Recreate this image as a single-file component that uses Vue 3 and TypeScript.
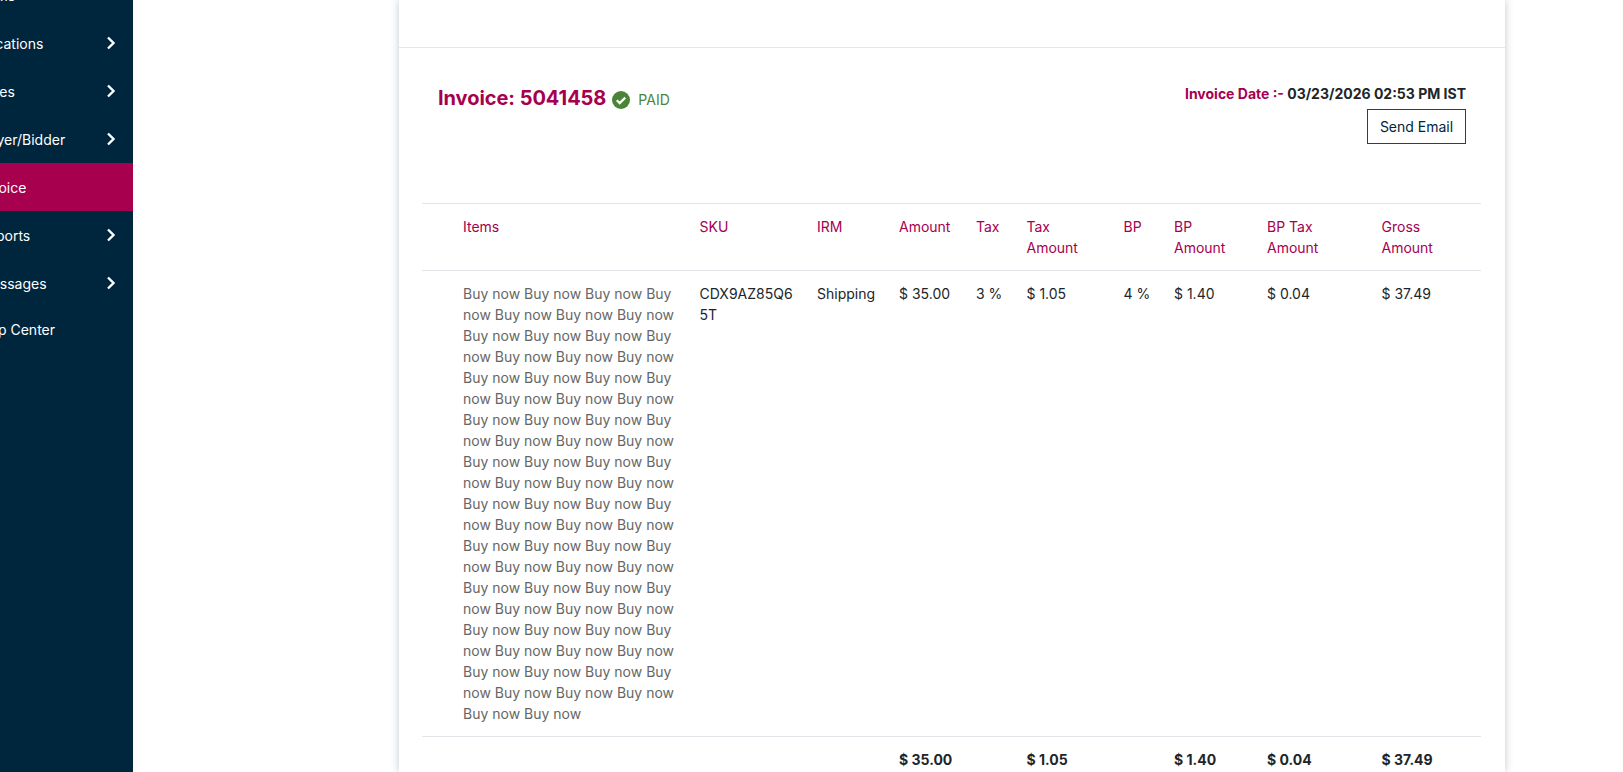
<script setup lang="ts">
interface NavItem {
  label: string;
  hasChildren: boolean;
  active?: boolean;
}

const navItems: NavItem[] = [
  {label: 'Items', hasChildren: false},
  {label: 'Locations', hasChildren: true},
  {label: 'Sales', hasChildren: true},
  {label: 'Buyer/Bidder', hasChildren: true},
  {label: 'Invoice', hasChildren: false, active: true},
  {label: 'Reports', hasChildren: true},
  {label: 'Messages', hasChildren: true},
  {label: 'Help Center', hasChildren: false},
];

const columns = [
  {key: 'blank', title: '', width: 29},
  {key: 'items', title: 'Items', width: 236.5},
  {key: 'sku', title: 'SKU', width: 117.5},
  {key: 'irm', title: 'IRM', width: 82},
  {key: 'amount', title: 'Amount', width: 77},
  {key: 'tax', title: 'Tax', width: 50.5},
  {key: 'taxAmount', title: 'Tax Amount', width: 97},
  {key: 'bp', title: 'BP', width: 50.5},
  {key: 'bpAmount', title: 'BP Amount', width: 93},
  {key: 'bpTax', title: 'BP Tax Amount', width: 114.5},
  {key: 'gross', title: 'Gross Amount', width: 111.5},
];

const itemName = Array(72).fill('Buy now').join(' ');
</script>

<template>
  <div class="page">
    <aside class="sidebar">
      <ul class="nav">
        <li v-for="item in navItems" :key="item.label" class="nav-item" :class="{active: item.active}">
          <span class="nav-label">{{ item.label }}</span>
          <svg v-if="item.hasChildren" class="chevron" viewBox="0 0 10 14" width="10" height="14">
            <path d="M2 1.5 L7.5 7 L2 12.5" fill="none" stroke="#fff" stroke-width="2.4"/>
          </svg>
        </li>
      </ul>
    </aside>

    <main class="main">
      <div class="card">
        <div class="card-top"></div>
        <section class="invoice">
          <div class="invoice-head">
            <div class="invoice-title">
              <h2>Invoice: 5041458</h2>
              <svg class="check" viewBox="0 0 18 18" width="18" height="18">
                <circle cx="9" cy="9" r="9" fill="#4a8437"/>
                <path d="M4.8 9.3 L7.7 12.1 L13.2 6.6" fill="none" stroke="#fff" stroke-width="2.2"/>
              </svg>
              <span class="status">PAID</span>
            </div>
            <div class="invoice-meta">
              <div class="invoice-date"><b>Invoice Date :-</b> 03/23/2026 02:53 PM IST</div>
              <button class="send-btn">Send Email</button>
            </div>
          </div>

          <table class="items-table">
            <colgroup>
              <col v-for="col in columns" :key="col.key" :style="{width: col.width + 'px'}"/>
            </colgroup>
            <thead>
              <tr>
                <th v-for="col in columns" :key="col.key">{{ col.title }}</th>
              </tr>
            </thead>
            <tbody>
              <tr>
                <td></td>
                <td class="item-name">{{ itemName }}</td>
                <td class="sku">CDX9AZ85Q65T</td>
                <td class="nowrap">Shipping</td>
                <td class="nowrap">$ 35.00</td>
                <td class="nowrap">3 %</td>
                <td class="nowrap">$ 1.05</td>
                <td class="nowrap">4 %</td>
                <td class="nowrap">$ 1.40</td>
                <td class="nowrap">$ 0.04</td>
                <td class="nowrap">$ 37.49</td>
              </tr>
            </tbody>
            <tfoot>
              <tr>
                <td></td>
                <td></td>
                <td></td>
                <td></td>
                <td class="nowrap">$ 35.00</td>
                <td></td>
                <td class="nowrap">$ 1.05</td>
                <td></td>
                <td class="nowrap">$ 1.40</td>
                <td class="nowrap">$ 0.04</td>
                <td class="nowrap">$ 37.49</td>
              </tr>
            </tfoot>
          </table>
        </section>
      </div>
    </main>
  </div>
</template>

<style>
html, body {
  margin: 0;
  overflow: hidden;
  background: #fff;
}
</style>

<style scoped>
.page {
  display: flex;
  height: 772px;
  overflow: hidden;
  font-family: Inter, "Liberation Sans", sans-serif;
  font-size: 14px;
  line-height: 21px;
  color: #212529;
}

.sidebar {
  flex: 0 0 133px;
  background: #00263e;
  overflow: hidden;
}

.nav {
  list-style: none;
  margin: -29px 0 0;
  padding: 0;
}

.nav-item {
  display: flex;
  align-items: center;
  justify-content: space-between;
  height: 48px;
  padding-right: 17px;
  color: #fff;
}

.nav-item:last-child {
  height: 44px;
}

.nav-item:last-child .nav-label {
  margin-left: -24px;
}

.nav-item.active {
  background: #a6004f;
}

.nav-label {
  margin-left: -21px;
  white-space: nowrap;
}

.main {
  flex: 1;
  min-width: 0;
  padding-left: 266px;
  padding-right: 118px;
}

.card {
  height: 100%;
  background: #fff;
  box-shadow: 0 0 8px rgba(0, 38, 62, 0.25);
}

.card-top {
  height: 47px;
  border-bottom: 1px solid #e3e6ea;
}

.invoice {
  padding: 0 24px 0 23px;
}

.invoice-head {
  display: flex;
  justify-content: space-between;
  align-items: flex-start;
  height: 155px;
  padding: 36px 15px 0 16px;
  box-sizing: border-box;
}

.invoice-title {
  display: flex;
  align-items: center;
  gap: 5px;
  margin-top: 2px;
}

.invoice-title h2 {
  margin: -2px 0 0;
  font-size: 20px;
  line-height: 28px;
  font-weight: 700;
  letter-spacing: -0.05px;
  color: #a6004f;
}

.check {
  margin-top: 1px;
  margin-left: 1px;
}

.status {
  margin-top: 1px;
  margin-left: 3px;
  color: #4a8437;
}

.invoice-meta {
  display: flex;
  flex-direction: column;
  align-items: flex-end;
  gap: 5px;
}

.invoice-date {
  font-weight: 700;
  color: #212529;
  margin-top: -1px;
}

.invoice-date b {
  font-weight: 700;
  color: #a6004f;
}

.send-btn {
  width: 99px;
  height: 35px;
  padding: 0;
  background: #fff;
  border: 1px solid #a6004f;
  font-family: inherit;
  font-size: 14px;
  color: #00263e;
}

.items-table {
  width: 1059px;
  table-layout: fixed;
  border-collapse: collapse;
}

.items-table th,
.items-table td {
  padding: 12px;
  text-align: left;
  vertical-align: top;
  font-weight: 400;
  border-top: 1px solid #e3e4ea;
}

.items-table th {
  color: #a6004f;
}

.item-name {
  color: #666;
}

.sku {
  overflow-wrap: anywhere;
}

.nowrap {
  white-space: nowrap;
}

.items-table tfoot td {
  font-weight: 700;
}
</style>
